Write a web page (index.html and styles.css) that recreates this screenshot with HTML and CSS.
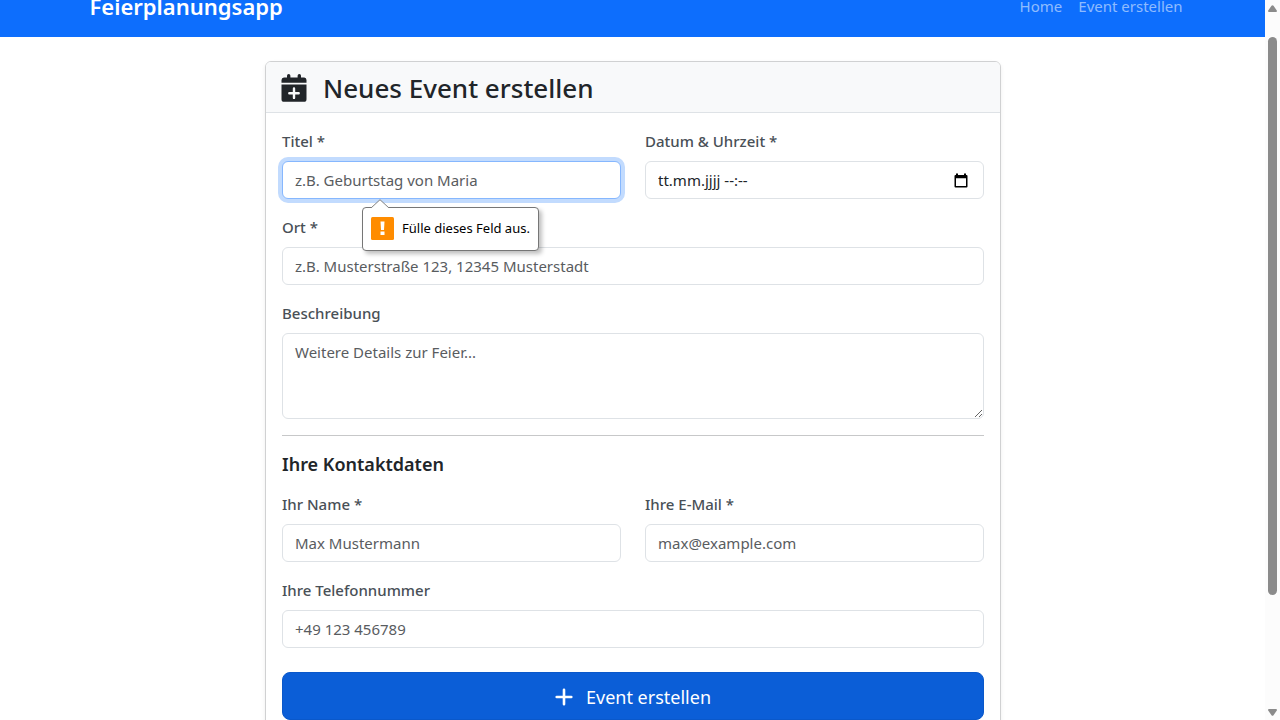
FILE: index.html
```html
<!DOCTYPE html>
<html lang="de">
<head>
<meta charset="utf-8">
<meta name="viewport" content="width=device-width, initial-scale=1">
<title>Feierplanungsapp</title>
<link rel="stylesheet" href="styles.css">
</head>
<body>
<div class="viewport">
  <div class="page">
    <header class="navbar">
      <div class="container navbar-inner">
        <a class="brand" href="#">Feierplanungsapp</a>
        <nav class="nav">
          <a href="#">Home</a>
          <a href="#">Event erstellen</a>
        </nav>
      </div>
    </header>
    <main class="container main">
      <section class="card">
        <div class="card-header">
          <svg class="title-icon" viewBox="0 0 26 28" aria-hidden="true">
            <path fill="currentColor" d="M6 1.8a1.7 1.7 0 0 1 3.4 0V3.500h7.200V1.800a1.700 1.700 0 0 1 3.400 0V3.500h2.500A2.600 2.600 0 0 1 25.500 6v2.700H.500V6A2.600 2.600 0 0 1 3 3.500h3zM.5 10.500h25v14.700a2.600 2.600 0 0 1-2.600 2.600H3.100a2.600 2.600 0 0 1-2.600-2.600z"/>
            <path stroke="#f8f9fa" stroke-width="2.400" stroke-linecap="round" d="M13 14.500v9.400M8.300 19.200h9.400"/>
          </svg>
          <h1>Neues Event erstellen</h1>
        </div>
        <form class="card-body" novalidate>
          <div class="row">
            <div class="field">
              <label for="title">Titel *</label>
              <input class="control focused" id="title" type="text" placeholder="z.B. Geburtstag von Maria" required>
              <div class="bubble" role="alert">
                <svg class="bubble-arrow" viewBox="0 0 18 9" aria-hidden="true"><path d="M0 9 9 .700 18 9" fill="#fff" stroke="#808080"/></svg>
                <svg class="bubble-icon" viewBox="0 0 23 23" aria-hidden="true"><rect width="23" height="23" rx="1.500" fill="#ff8c00"/><path fill="#fff" d="M9.500 4.500h4l-.5 8.500h-3zM9.500 14.500h4v3.500h-4z"/></svg>
                <span>Fülle dieses Feld aus.</span>
              </div>
            </div>
            <div class="field">
              <label for="date">Datum &amp; Uhrzeit *</label>
              <div class="control date-control">
                <input id="date" type="text" value="tt.mm.jjjj --:--" required>
                <button class="picker" type="button" aria-label="Datum auswählen">
                  <svg viewBox="0 0 14 15" aria-hidden="true"><path fill="#000" fill-rule="evenodd" d="M2 .5h2V2h6V.500h2V2h.500Q13.500 2 13.500 3v10.500q0 1-1 1h-11q-1 0-1-1V3q0-1 1-1H2zM2 5.200V13h10V5.200z"/></svg>
                </button>
              </div>
            </div>
          </div>
          <div class="field">
            <label for="place">Ort *</label>
            <input class="control" id="place" type="text" placeholder="z.B. Musterstraße 123, 12345 Musterstadt" required>
          </div>
          <div class="field">
            <label for="description">Beschreibung</label>
            <textarea class="control" id="description" rows="3" placeholder="Weitere Details zur Feier..."></textarea>
          </div>
          <hr>
          <h2>Ihre Kontaktdaten</h2>
          <div class="row">
            <div class="field">
              <label for="name">Ihr Name *</label>
              <input class="control" id="name" type="text" placeholder="Max Mustermann" required>
            </div>
            <div class="field">
              <label for="email">Ihre E-Mail *</label>
              <input class="control" id="email" type="email" placeholder="max@example.com" required>
            </div>
          </div>
          <div class="field">
            <label for="phone">Ihre Telefonnummer</label>
            <input class="control" id="phone" type="tel" placeholder="+49 123 456789">
          </div>
          <button class="submit" type="submit">
            <svg viewBox="0 0 18 18" aria-hidden="true"><path stroke="#fff" stroke-width="2.600" stroke-linecap="round" d="M9 1.700v14.600M1.700 9h14.600"/></svg>
            Event erstellen
          </button>
        </form>
      </section>
    </main>
  </div>
  <div class="scrollbar" aria-hidden="true">
    <svg viewBox="0 0 9 7"><path fill="#8b8b8b" d="M3.500.8q1-1.300 2 0L8.800 5.500Q9.300 7 8 7H1Q-.3 7 .2 5.500z"/></svg>
    <div class="track"><div class="thumb"></div></div>
    <svg viewBox="0 0 9 7"><path fill="#8b8b8b" d="M3.500 6.200q1 1.300 2 0L8.800 1.500Q9.300 0 8 0H1Q-.3 0 .2 1.500z"/></svg>
  </div>
</div>
</body>
</html>
```
FILE: styles.css
```css
* { box-sizing: border-box; }

body {
  margin: 0;
  background: #fff;
  color: #212529;
  font-family: "Segoe UI", "Noto Sans", sans-serif;
  font-size: 15px;
  line-height: 24px;
}

.viewport {
  display: flex;
  height: 100vh;
  overflow: hidden;
}

.page {
  flex: 1;
  min-width: 0;
  overflow: hidden;
}

.container {
  width: 100%;
  max-width: 1140px;
  margin: 0 auto;
  padding: 0 12px;
}

.navbar {
  margin-top: -24px;
  padding: 8px 0 9px;
  background: #0d6efd;
}

.navbar-inner {
  display: flex;
  align-items: center;
  justify-content: space-between;
  min-height: 44px;
}

.brand {
  padding-left: 15px;
  color: #fff;
  font-size: 22px;
  font-weight: 600;
  line-height: 32px;
  text-decoration: none;
}

.nav { display: flex; }

.nav a {
  padding: 8px;
  color: rgba(255, 255, 255, 0.55);
  text-decoration: none;
}

.main { padding: 24px 12px 0 13px; }

.card {
  width: 66%;
  min-width: 736px;
  margin: 0 auto;
  border: 1px solid #d0d1d2;
  border-radius: 6px;
  box-shadow: 0 2px 4px rgba(0, 0, 0, 0.075);
}

.card-header {
  display: flex;
  align-items: center;
  gap: 16px;
  padding: 9px 15px 7px;
  border-bottom: 1px solid #dee2e6;
  border-radius: 5px 5px 0 0;
  background: #f8f9fa;
}

.title-icon {
  width: 26px;
  height: 28px;
}

h1, h2 { margin: 0; }

h1 {
  font-size: 26px;
  font-weight: 500;
  line-height: 34px;
}

h2 {
  margin: 16px 0;
  font-size: 18px;
  font-weight: 600;
  line-height: 24px;
}

.card-body { padding: 16px; }

.row {
  display: grid;
  grid-template-columns: 1fr 1fr;
  gap: 24px;
}

.field {
  position: relative;
  margin-bottom: 16px;
}

label {
  display: block;
  margin-bottom: 8px;
  color: #495057;
  font-weight: 500;
}

.control {
  display: block;
  width: 100%;
  padding: 6px 12px;
  border: 1px solid #dee2e6;
  border-radius: 6px;
  background: #fff;
  color: #212529;
  font: inherit;
  outline: 0;
}

.control::placeholder { color: #595c5f; opacity: 1; }

.focused {
  border-color: #86b7fe;
  box-shadow: 0 0 0 4px #c2dbfe;
}

textarea.control {
  height: 86px;
  resize: vertical;
}

.date-control {
  display: flex;
  align-items: center;
}

.date-control input {
  flex: 1;
  min-width: 0;
  padding: 0;
  border: 0;
  outline: 0;
  background: none;
  color: #212529;
  font: inherit;
}

.picker {
  display: flex;
  padding: 0 3px;
  border: 0;
  background: none;
}

.picker svg {
  width: 14px;
  height: 15px;
}

.bubble {
  position: absolute;
  z-index: 2;
  top: 78px;
  left: 80px;
  display: flex;
  align-items: center;
  gap: 8px;
  padding: 8px 8px 10px;
  border: 1px solid #767676;
  border-radius: 4px;
  background: #fff;
  box-shadow: 3px 3px 4px rgba(0, 0, 0, 0.25);
  color: #000;
  font-size: 13px;
  white-space: nowrap;
}

.bubble-arrow {
  position: absolute;
  top: -9px;
  left: 8px;
  width: 18px;
  height: 9px;
}

.bubble-icon {
  width: 23px;
  height: 23px;
}

hr {
  margin: 0;
  border: 0;
  border-top: 1px solid #c7c8c9;
}

.submit {
  display: flex;
  align-items: center;
  justify-content: center;
  gap: 13px;
  width: 100%;
  margin-top: 24px;
  padding: 9px 16px 7px;
  border: 1px solid #0a58ca;
  border-radius: 8px;
  background: #0b5ed7;
  color: #fff;
  font: inherit;
  font-size: 18px;
  line-height: 30px;
}

.submit svg {
  width: 18px;
  height: 18px;
}

.scrollbar {
  display: flex;
  flex-direction: column;
  align-items: center;
  width: 15px;
  padding: 5px 0 4px;
  background: #fcfcfc;
}

.scrollbar svg {
  width: 9px;
  height: 7px;
}

.track {
  flex: 1;
  width: 9px;
  padding: 25px 0 114px;
}

.thumb {
  height: 100%;
  border-radius: 5px;
  background: #8b8b8b;
}
```
